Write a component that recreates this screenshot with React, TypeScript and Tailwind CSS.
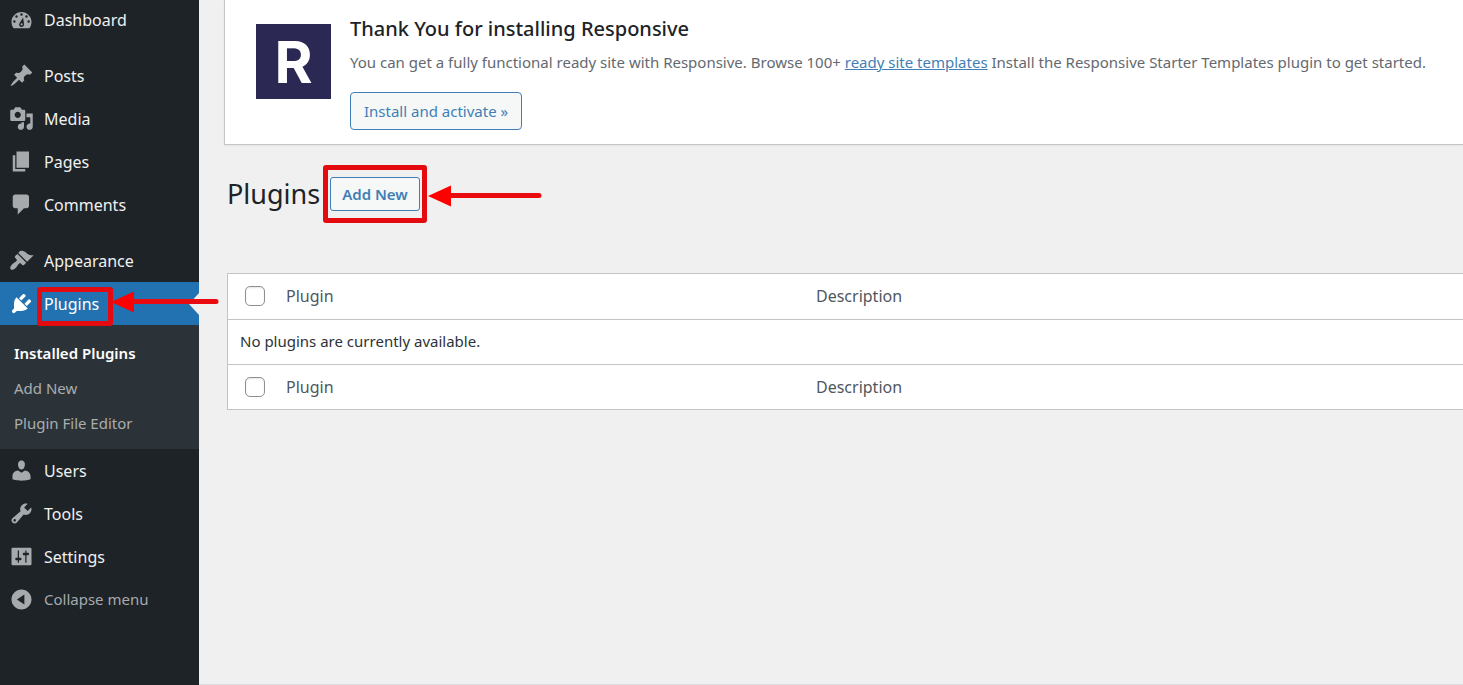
import clsx from "clsx";

const ICONS: Record<string, string> = {
  dashboard:
    "M3.76 17h12.48c1.1-1.37 1.76-3.11 1.76-5 0-4.42-3.58-8-8-8s-8 3.58-8 8c0 1.89.66 3.63 1.76 5zM10 5a1 1 0 1 1 0 2a1 1 0 1 1 0-2zM6 6.600a1 1 0 1 1 0 2a1 1 0 1 1 0-2zM14 6.600a1 1 0 1 1 0 2a1 1 0 1 1 0-2zM4.300 10.500a1 1 0 1 1 0 2a1 1 0 1 1 0-2zM15.700 10.500a1 1 0 1 1 0 2a1 1 0 1 1 0-2zM11.300 8.300l.7 5.300a2 2 0 1 1-3.500-.900zM10.100 12.900a.9.9 0 1 0 0 1.800a.9.9 0 1 0 0-1.800z",
  posts:
    "M10.44 3.02l1.82-1.82 6.36 6.35-1.83 1.82c-1.05-.68-2.48-.57-3.41.36l-.75.75c-.92.93-1.04 2.35-.35 3.41l-1.83 1.82-2.41-2.41-2.8 2.79c-.42.42-3.38 2.71-3.8 2.29s1.86-3.39 2.28-3.81l2.79-2.79L4.1 9.36l1.83-1.82c1.05.69 2.48.57 3.4-.36l.75-.75c.93-.92 1.05-2.35.36-3.41z",
  media:
    "M13 11V4c0-.55-.45-1-1-1h-1.67L9 1H5L3.67 3H2c-.55 0-1 .45-1 1v7c0 .55.45 1 1 1h10c.55 0 1-.45 1-1zM7 4.5c1.38 0 2.5 1.12 2.5 2.5S8.38 9.5 7 9.5 4.5 8.38 4.5 7 5.62 4.5 7 4.5zM14 6h5v10.5c0 1.38-1.12 2.5-2.5 2.5S14 17.88 14 16.5s1.12-2.5 2.5-2.5c.17 0 .34.02.5.05V9h-3V6zm-4 8.05V13h2v3.5c0 1.38-1.12 2.5-2.5 2.5S7 17.88 7 16.5 8.12 14 9.5 14c.17 0 .34.02.5.05z",
  pages: "M6 15V2h10v13H6zm-1 1h8v2H3V5h2v11z",
  comments:
    "M5 2h9c1.1 0 2 .9 2 2v7c0 1.1-.9 2-2 2h-2l-5 5v-5H5c-1.1 0-2-.9-2-2V4c0-1.1.9-2 2-2z",
  appearance:
    "M14.48 11.06L7.41 3.99l1.5-1.5c.5-.56 2.3-.47 3.51.32 1.21.8 1.43 1.28 2.91 2.1 1.18.64 2.45 1.26 4.45.85zm-.71.71L6.7 4.7 4.93 6.47c-.39.39-.39 1.02 0 1.41l1.06 1.06c.39.39.39 1.03 0 1.42-.6.6-1.43 1.11-2.21 1.69-.35.26-.7.53-1.01.84C1.43 14.23.4 16.08 1.4 17.07c.99 1 2.84-.03 4.18-1.36.31-.31.58-.66.85-1.02.57-.78 1.08-1.61 1.69-2.21.39-.39 1.02-.39 1.41 0l1.06 1.06c.39.39 1.02.39 1.41 0z",
  plugins:
    "M13.11 4.36L9.87 7.6 8 5.73l3.24-3.24c.35-.34 1.05-.2 1.56.32.52.51.66 1.21.31 1.55zm-8 1.77l.91-1.12 9.01 9.01-1.19.84c-.71.71-2.63 1.16-3.82 1.16H6.14L4.9 17.26c-.59.59-1.54.59-2.12 0-.59-.58-.59-1.53 0-2.12l1.24-1.24v-3.88c0-1.13.4-3.19 1.09-3.89zm7.26 3.97l3.24-3.24c.34-.35 1.04-.21 1.55.31.52.51.66 1.21.31 1.55l-3.24 3.25z",
  users:
    "M10 9.25c-2.27 0-2.73-3.44-2.73-3.44C7 4.02 7.82 2 9.97 2c2.16 0 2.98 2.02 2.71 3.81 0 0-.41 3.44-2.68 3.44zm0 2.57L12.72 10c2.39 0 4.52 2.33 4.52 4.53v2.49s-3.65 1.13-7.24 1.13c-3.65 0-7.24-1.13-7.24-1.13v-2.49c0-2.25 1.94-4.48 4.47-4.48z",
  tools:
    "M16.68 9.77c-1.34 1.34-3.3 1.67-4.95.99l-5.41 6.52c-.99.99-2.59.99-3.58 0s-.99-2.59 0-3.57l6.52-5.42c-.68-1.65-.35-3.61.99-4.95 1.28-1.28 3.12-1.62 4.72-1.06l-2.89 2.89 2.82 2.82 2.86-2.87c.53 1.58.18 3.39-1.08 4.65zM3.81 16.21c.4.39 1.04.39 1.43 0 .4-.4.4-1.04 0-1.43-.39-.4-1.03-.4-1.43 0-.39.39-.39 1.03 0 1.43z",
  settings:
    "M18 16V4c0-.55-.45-1-1-1H3c-.55 0-1 .45-1 1v12c0 .55.45 1 1 1h14c.55 0 1-.45 1-1zM8 11h1c.55 0 1 .45 1 1s-.45 1-1 1H8v1.5c0 .28-.22.5-.5.5s-.5-.22-.5-.5V13H6c-.55 0-1-.45-1-1s.45-1 1-1h1V5.5c0-.28.22-.5.5-.5s.5.22.5.5V11zm5-2h-1c-.55 0-1-.45-1-1s.45-1 1-1h1V5.5c0-.28.22-.5.5-.5s.5.22.5.5V7h1c.55 0 1 .45 1 1s-.45 1-1 1h-1v5.5c0 .28-.22.5-.5.5s-.5-.22-.5-.5V9z",
  collapse:
    "M10 2c4.420 0 8 3.580 8 8s-3.580 8-8 8-8-3.580-8-8 3.580-8 8-8zM12.300 6L6.300 10l6 4z",
};

const menuGroups = [
  [{ icon: "dashboard", label: "Dashboard" }],
  [
    { icon: "posts", label: "Posts" },
    { icon: "media", label: "Media" },
    { icon: "pages", label: "Pages" },
    { icon: "comments", label: "Comments" },
  ],
  [
    { icon: "appearance", label: "Appearance" },
    { icon: "plugins", label: "Plugins", current: true },
    { icon: "users", label: "Users" },
    { icon: "tools", label: "Tools" },
    { icon: "settings", label: "Settings" },
  ],
];

const submenu = ["Installed Plugins", "Add New", "Plugin File Editor"];

function MenuIcon({ name }: { name: string }) {
  return (
    <svg viewBox="0 0 20 20" className="size-[25px] shrink-0" fill="currentColor" fillRule="evenodd" aria-hidden="true">
      <path d={ICONS[name]} />
    </svg>
  );
}

function Arrow({ length, className }: { length: number; className: string }) {
  return (
    <svg
      width={length}
      height="22"
      viewBox={`0 0 ${length} 22`}
      className={clsx("pointer-events-none absolute z-10 max-w-none", className)}
      aria-hidden="true"
    >
      <path d={`M20 10.5H${length - 3}`} stroke="#e90b0f" strokeWidth="5" strokeLinecap="round" />
      <path d="M0 11L23 0.500V21.500z" fill="#fe0000" />
    </svg>
  );
}

function MenuItem({ item }: { item: { icon: string; label: string; current?: boolean } }) {
  return (
    <li>
      <a
        href="#"
        className={clsx(
          "relative flex h-[43px] items-center gap-[10px] pl-[9px] text-base",
          item.current ? "bg-[#2271b1] text-white" : "text-[#f0f0f1]"
        )}
      >
        <span className={clsx("flex", item.current ? "text-white" : "text-[#a7aaad]")}>
          <MenuIcon name={item.icon} />
        </span>
        <span>{item.label}</span>
        {item.current && (
          <>
            {/* Notch pointing at the content */}
            <span className="absolute right-0 top-[11px] border-y-[11px] border-r-[10px] border-y-transparent border-r-[#f0f0f1]" />
            <span className="absolute left-[37px] top-[5px] h-[39px] w-[76px] rounded-[3px] border-[5px] border-[#e30b10]" />
            <Arrow length={108} className="left-[111px] top-[9px]" />
          </>
        )}
      </a>
      {item.current && (
        <ul className="bg-[#2c3338] pb-2 pt-[11px]">
          {submenu.map((label, index) => (
            <li key={label}>
              <a
                href="#"
                className={clsx(
                  "flex h-[35px] items-center pl-[14px] text-[15px]",
                  index === 0 ? "font-semibold text-white" : "text-[#a9adb0]"
                )}
              >
                {label}
              </a>
            </li>
          ))}
        </ul>
      )}
    </li>
  );
}

function Sidebar() {
  return (
    <nav className="w-[199px] shrink-0 bg-[#1d2327]">
      <div className="-mt-0.5 flex flex-col gap-[13px]">
        {menuGroups.map((group) => (
          <ul key={group[0].label}>
            {group.map((item) => (
              <MenuItem key={item.label} item={item} />
            ))}
          </ul>
        ))}
      </div>
      <button type="button" className="flex h-[43px] w-full items-center gap-[10px] pl-[9px] text-[15px] text-[#a7aaad]">
        <MenuIcon name="collapse" />
        Collapse menu
      </button>
    </nav>
  );
}

function Notice() {
  return (
    <section className="ml-[25px] flex gap-[19px] border-b border-l border-[#c3c4c7] bg-white pb-[14px] pl-[31px] pt-4 shadow-xs">
      <div className="mt-2 flex size-[75px] shrink-0 items-center justify-center bg-[#2b2954] font-['Inter'] text-[58px] font-bold leading-none text-white">
        R
      </div>
      <div>
        <h3 className="text-xl leading-[26px] font-medium text-[#1d2327]">Thank You for installing Responsive</h3>
        <p className="mt-2 text-[15px] leading-6 whitespace-nowrap text-[#646970]">
          You can get a fully functional ready site with Responsive. Browse 100+{" "}
          <a href="#" className="text-[#3f7fb5] underline">
            ready site templates
          </a>{" "}
          Install the Responsive Starter Templates plugin to get started.
        </p>
        <button
          type="button"
          className="mt-[18px] h-[38px] rounded-[4px] border border-[#3f7fb5] bg-[#f6f7f7] px-[13px] text-[15px] text-[#3f7fb5]"
        >
          Install and activate »
        </button>
      </div>
    </section>
  );
}

function ColumnRow({ id }: { id: string }) {
  return (
    <tr className="h-[45px]">
      <th className="w-[46px] pl-[17px] text-left">
        <input
          id={id}
          type="checkbox"
          aria-label="Select All"
          className="block size-5 appearance-none rounded-[5px] border border-[#8c8f94] bg-white shadow-[inset_0_1px_2px_rgba(0,0,0,0.1)]"
        />
      </th>
      <th className="w-[530px] pl-3 text-left text-base font-normal">Plugin</th>
      <th className="pl-3 text-left text-base font-normal">Description</th>
    </tr>
  );
}

export default function App() {
  return (
    <div className="flex min-h-screen overflow-hidden bg-[#f0f0f1] font-['Noto_Sans','Open_Sans',sans-serif] text-[#50575e]">
      <Sidebar />
      <main className="min-w-0 flex-1 border-b border-[#dcdcde]">
        <Notice />

        {/* Page heading */}
        <div className="ml-7 mt-8 flex h-[34px] items-center gap-[10px]">
          <h1 className="text-[27px] leading-8 text-[#1d2327]">Plugins</h1>
          <div className="relative">
            <a
              href="#"
              className="flex h-[34px] items-center rounded-[3px] border border-[#3f7fb5] bg-[#f6f7f7] px-[11px] text-[15px] font-semibold text-[#3f7fb5]"
            >
              Add New
            </a>
            <span className="pointer-events-none absolute -inset-x-[7px] -inset-y-3 rounded-[3px] border-[5px] border-[#e30b10]" />
            <Arrow length={114} className="left-full top-2 ml-2" />
          </div>
        </div>

        {/* Plugin list */}
        <div className="ml-7 mt-[62px] border-y border-l border-[#c3c4c7] bg-white">
          <table className="w-full table-fixed border-collapse">
            <thead className="border-b border-[#c3c4c7]">
              <ColumnRow id="select-all-top" />
            </thead>
            <tbody>
              <tr className="h-[45px]">
                <td colSpan={3} className="pl-3 text-[15px] text-[#2c3338]">
                  No plugins are currently available.
                </td>
              </tr>
            </tbody>
            <tfoot className="border-t border-[#c3c4c7]">
              <ColumnRow id="select-all-bottom" />
            </tfoot>
          </table>
        </div>
      </main>
    </div>
  );
}
